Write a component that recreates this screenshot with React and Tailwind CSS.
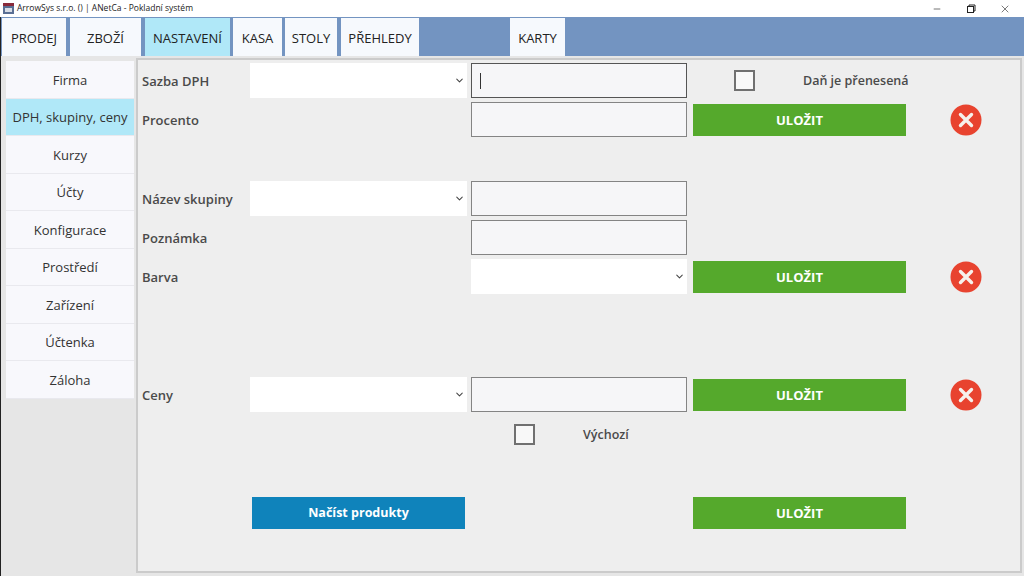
import React from "react";
import { ChevronDown, Minus, X } from "lucide-react";

const tabs = [
  { label: "PRODEJ", cls: "w-[64px]" },
  { label: "ZBOŽÍ", cls: "w-[71px] ml-[4px]" },
  { label: "NASTAVENÍ", cls: "w-[85px] ml-[4px]", active: true },
  { label: "KASA", cls: "w-[49px] ml-[3px]" },
  { label: "STOLY", cls: "w-[52px] ml-[3px]" },
  { label: "PŘEHLEDY", cls: "w-[78px] ml-[4px]" },
  { label: "KARTY", cls: "w-[55px] ml-[91px]" },
];

const menu = ["Firma", "DPH, skupiny, ceny", "Kurzy", "Účty", "Konfigurace", "Prostředí", "Zařízení", "Účtenka", "Záloha"];

function Tab({ label, cls, active }) {
  return (
    <div className={`${cls} h-[38px] pt-[3px] flex items-center justify-center text-[13px] text-[#222] ${active ? "bg-[#b0e8f8]" : "bg-[#f6f9fd]"}`}>
      {label}
    </div>
  );
}

function Select({ w = "w-[217px]" }) {
  return (
    <div className={`${w} h-[35px] bg-white flex items-center justify-end pr-[2px] shrink-0`}>
      <ChevronDown className="w-[11px] h-[11px] text-[#444]" strokeWidth={2.2} />
    </div>
  );
}

function Input({ focused }) {
  return (
    <div className={`w-[216px] h-[35px] ml-[4px] bg-[#f6f6f8] border shrink-0 flex items-center ${focused ? "border-[#555]" : "border-[#848484]"}`}>
      {focused && <div className="w-px h-[16px] ml-[8px] bg-[#333]" />}
    </div>
  );
}

function SaveButton() {
  return (
    <div className="w-[213px] h-[32px] ml-[6px] pt-[2px] bg-[#55a92c] flex items-center justify-center text-white font-bold text-[13px] shrink-0">
      ULOŽIT
    </div>
  );
}

function DeleteIcon() {
  return (
    <svg className="ml-[45px] -translate-x-px shrink-0" width="32" height="32" viewBox="0 0 32 32">
      <circle cx="16" cy="16" r="15.5" fill="#e8432f" />
      <path d="M10.5 10.5 L21.5 21.5 M21.5 10.5 L10.5 21.5" stroke="#f6f1ec" strokeWidth="3.4" strokeLinecap="round" />
    </svg>
  );
}

function Label({ children }) {
  return <div className="w-[108px] pt-[2px] shrink-0 text-[13px] font-semibold text-[#4a4a4a]">{children}</div>;
}

function Check() {
  return <div className="w-[21px] h-[21px] bg-[#f8f8f8] border-2 border-[#707070] shrink-0" />;
}

function Spacer() {
  return <div className="w-[217px] shrink-0" />;
}

export default function App() {
  return (
    <div className="w-[1024px] h-[576px] overflow-hidden flex flex-col bg-[#e6e6e6]" style={{ fontFamily: '"Open Sans", "Noto Sans", sans-serif' }}>
      {/* title bar */}
      <div className="h-[17px] bg-white flex items-center pl-[2px] shrink-0">
        <svg width="13" height="13" viewBox="0 0 13 13" className="shrink-0">
          <rect x="1" y="1" width="11" height="3" fill="#8a2a3a" />
          <rect x="1" y="4" width="11" height="8" fill="#5a6f94" />
          <rect x="3" y="6" width="7" height="4" fill="#d8dde6" />
        </svg>
        <span className="ml-[2px] text-[8.5px] text-[#222]">ArrowSys s.r.o. () | ANetCa - Pokladní systém</span>
        <div className="ml-auto flex items-center">
          <Minus className="w-[10px] h-[10px] text-[#222]" strokeWidth={1.5} />
          <svg className="ml-[24px]" width="10" height="10" viewBox="0 0 10 10" fill="none" stroke="#222" strokeWidth="1">
            <rect x="1.5" y="2.5" width="6" height="6" />
            <path d="M3 2.5 V1 H9 V7 H7.5" />
          </svg>
          <X className="ml-[23px] mr-[13px] w-[12px] h-[12px] text-[#222]" strokeWidth={1.2} />
        </div>
      </div>

      {/* nav */}
      <div className="h-[39px] bg-[#7394c1] border-l border-[#222] flex items-end pl-[1px] shrink-0">
        {tabs.map((t) => (
          <Tab key={t.label} {...t} />
        ))}
      </div>

      <div className="flex-1 flex border-l border-[#222] pt-[2px] pl-[1px] pr-[2px] pb-[3px] min-h-0 bg-[#e6e6e6]">
        {/* sidebar */}
        <div className="w-[134px] shrink-0 pl-[4px] pt-[3px] pr-[2px]">
          {menu.map((m, i) => (
            <div
              key={m}
              className={`h-[37.5px] pt-[2px] flex items-center justify-center text-[13px] text-[#333] border-b border-[#e9e9ee] ${i === 1 ? "bg-[#b0e8f8]" : "bg-[#f8f8fc]"}`}
            >
              {m}
            </div>
          ))}
        </div>

        {/* main panel */}
        <div className="flex-1 bg-[#eeeeee] border-2 border-[#cbcbcb] pl-[4px] pt-[3px] flex flex-col">
          <div className="h-[35px] flex items-center">
            <Label>Sazba DPH</Label>
            <Select />
            <Input focused />
            <div className="ml-[47px] w-[69px]"><Check /></div>
            <span className="pt-[2px] text-[12.5px] font-semibold text-[#4a4a4a]">Daň je přenesená</span>
          </div>
          <div className="h-[35px] mt-[4px] flex items-center">
            <Label>Procento</Label>
            <Spacer />
            <Input />
            <SaveButton />
            <DeleteIcon />
          </div>

          <div className="h-[35px] mt-[44px] flex items-center">
            <Label>Název skupiny</Label>
            <Select />
            <Input />
          </div>
          <div className="h-[35px] mt-[4px] flex items-center">
            <Label>Poznámka</Label>
            <Spacer />
            <Input />
          </div>
          <div className="h-[35px] mt-[4px] flex items-center">
            <Label>Barva</Label>
            <Spacer />
            <div className="ml-[4px]"><Select w="w-[216px]" /></div>
            <SaveButton />
            <DeleteIcon />
          </div>

          <div className="h-[35px] mt-[83px] flex items-center">
            <Label>Ceny</Label>
            <Select />
            <Input />
            <SaveButton />
            <DeleteIcon />
          </div>
          <div className="h-[21px] mt-[12px] flex items-center">
            <div className="ml-[372px] w-[69px]"><Check /></div>
            <span className="pt-[2px] text-[12.5px] font-semibold text-[#4a4a4a]">Výchozí</span>
          </div>

          <div className="h-[32px] mt-[52px] flex items-center">
            <div className="ml-[110px] w-[213px] h-[32px] pt-[1px] bg-[#0f83bb] flex items-center justify-center text-white font-bold text-[12.5px] shrink-0">
              Načíst produkty
            </div>
            <div className="ml-[222px]"><SaveButton /></div>
          </div>
        </div>
      </div>
    </div>
  );
}
